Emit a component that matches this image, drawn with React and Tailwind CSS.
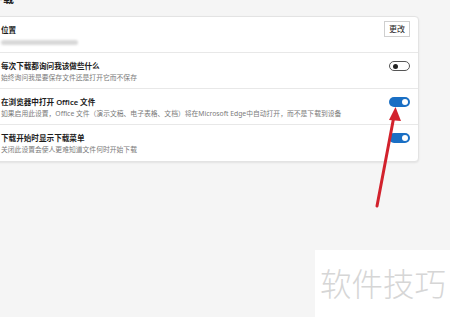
import React from "react";

const font = { fontFamily: '"Noto Sans", "Noto Sans CJK SC", sans-serif' };

function Toggle({ on }) {
  if (on) {
    return (
      <div className="w-[21px] h-[10px] rounded-full bg-[#1a6fc4] flex items-center justify-end pr-[2px] shrink-0">
        <div className="w-[6px] h-[6px] rounded-full bg-white" />
      </div>
    );
  }
  return (
    <div className="w-[21px] h-[10px] rounded-full border border-[#555] bg-white flex items-center pl-[3px] shrink-0">
      <div className="w-[5px] h-[5px] rounded-full bg-[#222]" />
    </div>
  );
}

function Row({ title, desc, right, last, blur }) {
  return (
    <div
      className={
        "flex items-start justify-between px-[8px] h-[36px] " +
        (last ? "" : "border-b border-[#e8e8e8]")
      }
    >
      <div className="flex flex-col pt-[8px]">
        <div className="text-[7.6px] leading-[10px] font-semibold text-[#1b1b1b] whitespace-nowrap">
          {title}
        </div>
        {blur ? (
          <div className="mt-[5px] w-[77px] h-[5px] rounded-full bg-[#d8d8d8] blur-[1px]" />
        ) : (
          <div className="mt-[2px] text-[6.8px] leading-[10px] text-[#7a7a7a] whitespace-nowrap">
            {desc}
          </div>
        )}
      </div>
      {right}
    </div>
  );
}

export default function App() {
  return (
    <div
      className="relative w-[450px] h-[317px] overflow-hidden bg-[#f5f5f5]"
      style={font}
    >
      <div className="ml-[-8px] w-[427px]">
        <div className="mt-[-7px] h-[11px] mb-[12px] text-[11px] leading-[11px] font-bold text-[#1b1b1b]">
          下载
        </div>
        <div className="bg-white border border-[#e3e3e3] rounded-[4px] shadow-[0_1px_2px_rgba(0,0,0,0.08)]">
          <Row
            title="位置"
            blur
            right={
              <div className="mt-[4px] w-[26px] h-[16px] border border-[#cfcfcf] bg-white flex items-center justify-center text-[8px] text-[#222]">
                更改
              </div>
            }
          />
          <Row
            title="每次下载都询问我该做些什么"
            desc="始终询问我是要保存文件还是打开它而不保存"
            right={
              <div className="mt-[8px]">
                <Toggle />
              </div>
            }
          />
          <Row
            title="在浏览器中打开 Office 文件"
            desc="如果启用此设置，Office 文件（演示文稿、电子表格、文档）将在Microsoft Edge中自动打开，而不是下载到设备"
            right={
              <div className="mt-[8px]">
                <Toggle on />
              </div>
            }
          />
          <Row
            last
            title="下载开始时显示下载菜单"
            desc="关闭此设置会使人更难知道文件何时开始下载"
            right={
              <div className="mt-[8px]">
                <Toggle on />
              </div>
            }
          />
        </div>
      </div>

      <svg
        className="absolute inset-0 pointer-events-none"
        width="450"
        height="317"
        viewBox="0 0 450 317"
      >
        <line
          x1="377"
          y1="206"
          x2="394"
          y2="116"
          stroke="#d2222d"
          strokeWidth="3"
          strokeLinecap="round"
        />
        <polygon points="395.5,107 389,120 401,121" fill="#d2222d" />
      </svg>

      <div className="absolute left-[315px] top-[250px] w-[135px] h-[67px] bg-white">
        <div
          className="pl-[5px] pt-[12px] text-[31.5px] leading-[40px] text-[#d6d6d6] font-light whitespace-nowrap"
          style={{ fontFamily: '"Noto Sans CJK SC", sans-serif' }}
        >
          软件技巧
        </div>
      </div>
    </div>
  );
}
